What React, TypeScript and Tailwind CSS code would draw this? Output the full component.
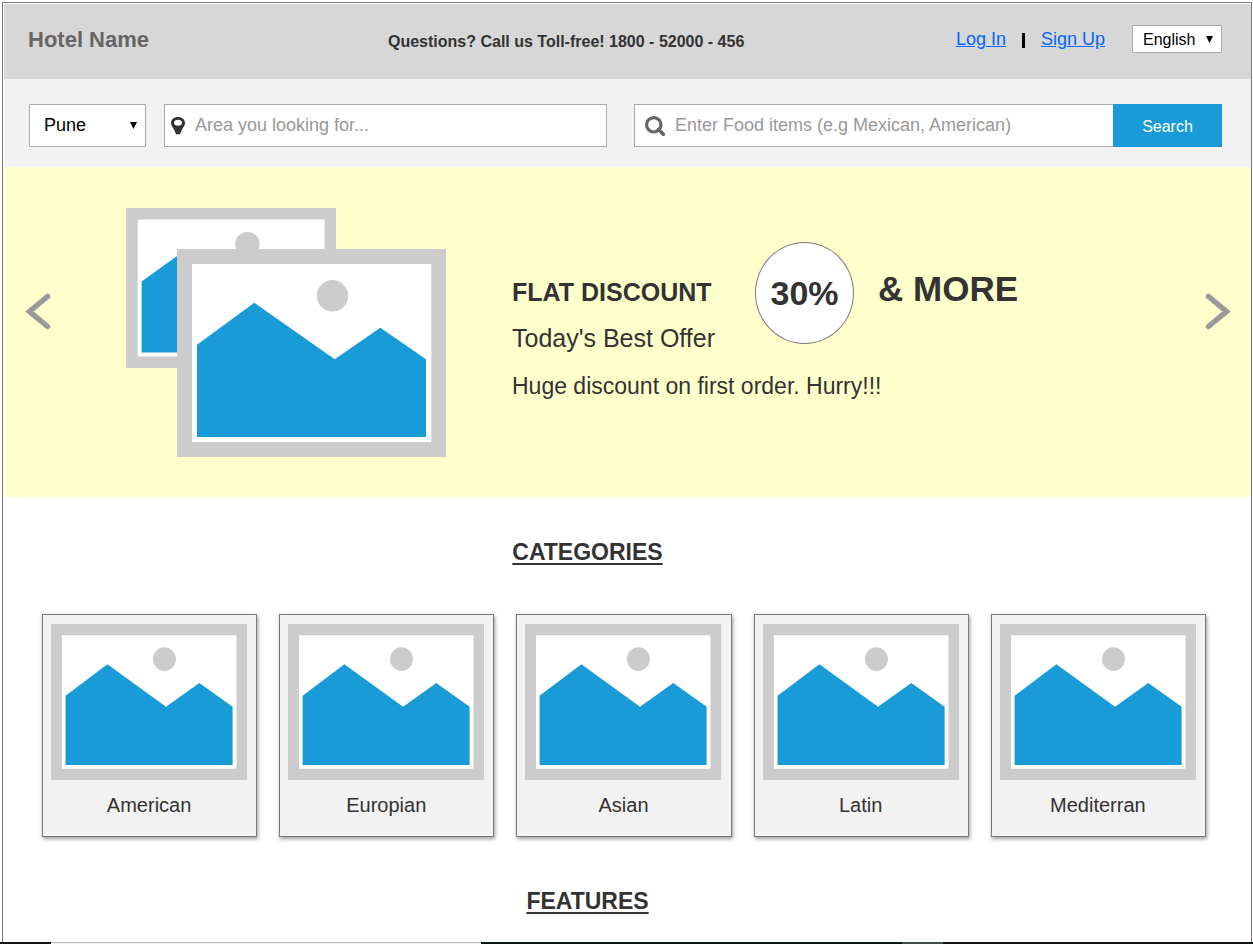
import React from "react";

const categories = ["American", "Europian", "Asian", "Latin", "Mediterran"];

function Picture({ className }: { className: string }) {
  return (
    <svg viewBox="0 0 269 208" preserveAspectRatio="none" className={className} aria-hidden="true">
      <rect width="269" height="208" fill="#cccccc" />
      <rect x="15" y="15" width="239.3" height="178" fill="#ffffff" />
      <circle cx="155.5" cy="46.8" r="15.7" fill="#cccccc" />
      <path d="M20 95.7 77.3 53.7 157.7 110.3 203.3 78.7 249 110.3V188H20z" fill="#199bd7" />
    </svg>
  );
}

function Chevron({ flip = false }: { flip?: boolean }) {
  return (
    <svg width="26" height="38" viewBox="0 0 26 38" fill="none" className="block" aria-hidden="true">
      <path
        d={flip ? "M3.5 3.500 21.500 18.500 3.500 33.500" : "M22.500 3.500 4.500 18.500 22.500 33.500"}
        stroke="#999999"
        strokeWidth="5.5"
        strokeLinecap="round"
        strokeLinejoin="miter"
      />
    </svg>
  );
}

function SelectArrow({ className }: { className: string }) {
  return (
    <svg viewBox="0 0 7 7" className={className} aria-hidden="true">
      <path d="M0 0H7L3.5 7z" fill="#000000" />
    </svg>
  );
}

function Header() {
  return (
    <header className="grid h-[75px] grid-cols-[360px_1fr_auto] bg-[#d7d7d7] pr-[29px] pl-6">
      <h1 className="pt-[22px] text-[22px] leading-7 font-bold text-[#666666]">Hotel Name</h1>
      <p className="pt-7 text-base leading-5 font-bold whitespace-nowrap">
        Questions? Call us Toll-free! 1800 - 52000 - 456
      </p>
      <nav className="flex items-start pt-[21px] text-lg leading-7 text-[#0066ff]">
        <a href="#login" className="underline">Log In</a>
        <span className="mx-4 mt-2 h-[15px] w-[3px] bg-black" />
        <a href="#signup" className="underline">Sign Up</a>
        <div className="relative ml-[27px]">
          <select
            aria-label="Language"
            className="block h-7 w-[90px] appearance-none rounded-[1px] border border-[#a9a9a9] bg-white pt-0.5 pl-2.5 text-base leading-6 text-black"
          >
            <option>English</option>
          </select>
          <SelectArrow className="pointer-events-none absolute top-[11px] right-[9px] size-[7px]" />
        </div>
      </nav>
    </header>
  );
}

function SearchBar() {
  return (
    <form className="flex h-[88px] items-start bg-[#f2f2f2] pt-[25px] pr-[29px] pl-[25px] text-lg" onSubmit={(e) => e.preventDefault()}>
      <div className="relative">
        <select
          aria-label="City"
          className="block h-[43px] w-[117px] appearance-none rounded-[1px] border border-[#a9a9a9] bg-white pb-0.5 pl-3.5 text-black"
        >
          <option>Pune</option>
        </select>
        <SelectArrow className="pointer-events-none absolute top-[18px] right-[9px] size-[7px]" />
      </div>
      <label className="ml-[18px] flex h-[43px] min-w-0 flex-[435] items-center border border-[#a9a9a9] bg-white pl-1.5">
        <svg width="14" height="18" viewBox="0 0 14 18" className="shrink-0" aria-hidden="true">
          <path
            fillRule="evenodd"
            d="M7 0C3 0 0 2.600 0 6c0 2 1.200 3.500 2.400 5.400C3.600 13.200 4.300 15.500 5 17.300h4c.7-1.800 1.400-4.100 2.600-5.900C12.800 9.500 14 8 14 6 14 2.600 11 0 7 0zm0 2.700c2.400 0 4 1.200 4 3S9.400 8.700 7 8.700 3 7.500 3 5.700s1.600-3 4-3z"
            fill="#333333"
          />
        </svg>
        <input
          aria-label="Area"
          placeholder="Area you looking for..."
          className="ml-2.5 h-full min-w-0 flex-1 outline-none placeholder:text-[#999999]"
        />
      </label>
      <div className="ml-[27px] flex min-w-0 flex-[588]">
        <label className="flex h-[43px] min-w-0 flex-1 items-center border border-r-0 border-[#a9a9a9] bg-white pl-2.5">
          <svg width="20" height="20" viewBox="0 0 20 20" fill="none" className="shrink-0" aria-hidden="true">
            <circle cx="8.800" cy="8.800" r="7.200" stroke="#666666" strokeWidth="3.200" />
            <path d="M13.500 13.500 18.300 18.300" stroke="#666666" strokeWidth="3.600" strokeLinecap="round" />
          </svg>
          <input
            aria-label="Food items"
            placeholder="Enter Food items (e.g Mexican, American)"
            className="ml-2.5 h-full min-w-0 flex-1 outline-none placeholder:text-[#999999]"
          />
        </label>
        <button type="submit" className="h-[43px] w-[109px] bg-[#199bd7] pt-0.5 text-base text-white">
          Search
        </button>
      </div>
    </form>
  );
}

function Hero() {
  return (
    <section className="flex h-[330px] items-start bg-[#ffffcc] pr-5 pl-[21px]">
      <button type="button" aria-label="Previous offer" className="mt-[126px]">
        <Chevron />
      </button>
      <div className="relative mt-[41px] ml-[75px] h-[249px] w-[320px] shrink-0">
        <Picture className="h-[160px] w-[210px]" />
        <Picture className="absolute right-0 bottom-0 h-[208px] w-[269px]" />
      </div>
      <div className="mt-[75px] ml-[66px] flex-1">
        <div className="flex items-start font-bold whitespace-nowrap">
          <h2 className="w-[243px] pt-9 text-[25px] leading-7">FLAT DISCOUNT</h2>
          <div className="flex h-[102px] w-[99px] items-center justify-center rounded-[50%] border border-[#797979] bg-white text-[34px]">
            30%
          </div>
          <span className="ml-6 pt-[27px] text-[35px] leading-10">&amp; MORE</span>
        </div>
        <p className="-mt-[22px] text-[25px] leading-8">Today's Best Offer</p>
        <p className="mt-4 text-[23px] leading-8">Huge discount on first order. Hurry!!!</p>
      </div>
      <button type="button" aria-label="Next offer" className="mt-[126px]">
        <Chevron flip />
      </button>
    </section>
  );
}

function SectionTitle({ children }: { children: React.ReactNode }) {
  return (
    <h2 className="pr-20 text-center text-[23px] leading-7 font-bold underline decoration-2 underline-offset-3">
      {children}
    </h2>
  );
}

export default function App() {
  return (
    <div className="flex min-h-screen flex-col bg-white pt-0.5 font-['Liberation_Sans',Arial,sans-serif] text-[#333333]">
      <div className="mr-px ml-0.5 flex-1 border border-b-0 border-[#797979] pt-px pb-6 pl-px">
        <Header />
        <SearchBar />
        <Hero />
        <main className="pt-[41px]">
          <SectionTitle>CATEGORIES</SectionTitle>
          <ul className="mt-12 mb-[50px] grid grid-cols-5 gap-[22px] pr-[45px] pl-[38px]">
            {categories.map((name) => (
              <li
                key={name}
                className="h-[223px] border border-[#797979] bg-[#f2f2f2] pt-[9px] pr-[9px] pl-2 text-center text-xl shadow-[1px_2px_4px_rgba(0,0,0,0.4)]"
              >
                <Picture className="h-[156px] w-full" />
                <p className="mt-[11px] leading-7">{name}</p>
              </li>
            ))}
          </ul>
          <SectionTitle>FEATURES</SectionTitle>
        </main>
      </div>
      <div className="flex h-0.5">
        <div className="w-[51px] bg-[#10151c]" />
        <div className="w-[430px] border-t border-[#b8b8b8] bg-[#f2f2f2]" />
        <div className="flex-1 bg-[#0c1617]" />
        <div className="w-[41px] bg-[#434a4a]" />
        <div className="w-[310px] bg-[#111718]" />
      </div>
    </div>
  );
}
